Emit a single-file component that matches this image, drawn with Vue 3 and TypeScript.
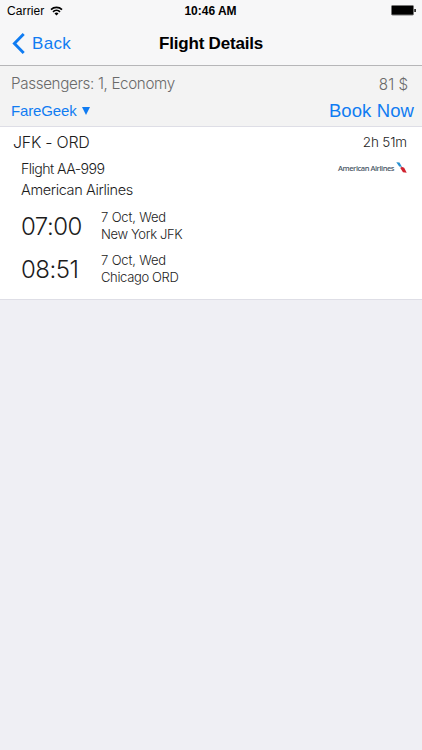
<script setup lang="ts">
interface Stop {
  time: string
  date: string
  place: string
}

const stops: Stop[] = [
  { time: '07:00', date: '7 Oct, Wed', place: 'New York JFK' },
  { time: '08:51', date: '7 Oct, Wed', place: 'Chicago ORD' },
]
</script>

<template>
  <div class="screen">
    <header class="top">
      <div class="status">
        <div class="carrier">
          <span>Carrier</span>
          <svg class="wifi" width="13" height="10" viewBox="0 0 13 10">
            <path d="M1 3.6A8 8 0 0 1 12 3.6M3 5.9A5 5 0 0 1 10 5.9" fill="none" stroke="#000" stroke-width="1.7" />
            <path d="M4.5 7.5A3 3 0 0 1 8.5 7.5L6.5 9.6Z" />
          </svg>
        </div>
        <span class="clock">10:46 AM</span>
        <svg class="battery" width="26" height="11" viewBox="0 0 26 11">
          <rect x="0.5" y="0.5" width="22" height="9.5" rx="1" fill="#000" stroke="#777" />
          <rect x="23.2" y="4" width="1.8" height="3" fill="#333" />
        </svg>
      </div>
      <nav class="nav">
        <button class="back">
          <svg width="13" height="21" viewBox="0 0 13 21">
            <path d="M11.7 1.1L2.4 10.5L11.7 19.9" fill="none" stroke="currentColor" stroke-width="2.9" />
          </svg>
          <span>Back</span>
        </button>
        <h1 class="title">Flight Details</h1>
      </nav>
    </header>

    <section class="summary">
      <div class="row who">
        <span class="passengers">Passengers: 1, Economy</span>
        <span class="price">81 $</span>
      </div>
      <div class="row offer">
        <button class="agency">
          <span>FareGeek</span>
          <svg width="8" height="8" viewBox="0 0 8 8"><path d="M0 0H8L4 8Z" fill="currentColor" /></svg>
        </button>
        <button class="book">Book Now</button>
      </div>
    </section>

    <section class="flight">
      <div class="row route">
        <span class="codes">JFK - ORD</span>
        <span class="duration">2h 51m</span>
      </div>
      <div class="row number">
        <span class="flight-no">Flight AA-999</span>
        <div class="logo">
          <span>American Airlines</span>
          <svg width="11" height="11" viewBox="0 0 11 11">
            <path d="M0.3 0.2L3.5 0.6L6 5L3.2 4.4Z" fill="#2790d0" />
            <path d="M3 4.3L6 5L5.3 6.4Z" fill="#b8c6d0" />
            <path d="M5.7 4.8L8.2 5.8L10.7 10.8L7 10.2L4.4 6.3Z" fill="#d0222f" />
          </svg>
        </div>
      </div>
      <div class="airline">American Airlines</div>
      <div v-for="stop in stops" :key="stop.time" class="stop">
        <span class="time">{{ stop.time }}</span>
        <div class="where">
          <span class="date">{{ stop.date }}</span>
          <span class="place">{{ stop.place }}</span>
        </div>
      </div>
    </section>
  </div>
</template>

<style>
body {
  background: #efeff4;
}
</style>

<style scoped>
.screen {
  min-height: 750px;
  background: #efeff4;
  color: #1c1c1c;
  font-family: Inter, "Liberation Sans", sans-serif;
  font-weight: 300;
  white-space: nowrap;
}

button {
  display: flex;
  align-items: center;
  padding: 0;
  border: 0;
  background: none;
  color: #107cf2;
  font: inherit;
}

.top {
  box-sizing: border-box;
  height: 66px;
  border-bottom: 1px solid #b6b6b8;
  background: #f7f7f8;
  color: #000;
  font-family: "Liberation Sans", sans-serif;
  font-weight: 400;
}

.status {
  display: grid;
  grid-template-columns: 1fr auto 1fr;
  align-items: center;
  height: 21px;
  padding: 0 5px 0 7px;
  font-size: 12px;
}

.carrier {
  display: flex;
  align-items: center;
  gap: 6px;
  letter-spacing: 0.1px;
}

.clock {
  position: relative;
  left: -1.5px;
  font-weight: 700;
  font-size: 12px;
}

.battery {
  justify-self: end;
}

.nav {
  display: grid;
  grid-template-columns: 1fr auto 1fr;
  align-items: center;
  height: 44px;
  padding: 0 12px;
}

.back {
  gap: 7px;
  font-size: 17px;
  letter-spacing: 0.3px;
}

.back span,
.title {
  padding-top: 2px;
}

.title {
  margin: 0;
  font-size: 17px;
  font-weight: 700;
  letter-spacing: -0.2px;
}

.row {
  display: flex;
  align-items: center;
  justify-content: space-between;
}

.summary {
  box-sizing: border-box;
  height: 61px;
  padding: 4px 8px 0 11px;
  border-bottom: 1px solid #dedee6;
  background: #f3f3f3;
}

.who {
  height: 27px;
  padding-right: 6px;
  color: #6a6a6a;
  font-size: 15.2px;
}

.passengers {
  letter-spacing: -0.35px;
}

.price {
  padding-top: 2px;
}

.offer {
  height: 27px;
  font-family: "Liberation Sans", sans-serif;
}

.agency {
  gap: 5px;
  font-size: 15px;
  letter-spacing: -0.15px;
}

.book {
  font-size: 18.5px;
  letter-spacing: 0.1px;
}

.flight {
  box-sizing: border-box;
  height: 173px;
  padding: 1px 15px 0 13px;
  border-bottom: 1px solid #dedee6;
  background: #fff;
}

.route {
  height: 28px;
  font-size: 16px;
}

.codes {
  letter-spacing: -0.25px;
}

.duration {
  font-size: 13.5px;
  letter-spacing: -0.15px;
}

.number {
  height: 25px;
  padding-left: 8px;
  font-size: 14.2px;
}

.flight-no {
  letter-spacing: -0.58px;
}

.logo {
  display: flex;
  align-items: center;
  gap: 2px;
  padding-bottom: 2px;
  color: #4c5a68;
  font-family: "Open Sans", sans-serif;
  font-size: 7.5px;
  font-weight: 600;
  letter-spacing: -0.46px;
}

.airline {
  height: 24px;
  padding-left: 8px;
  font-size: 14.5px;
  line-height: 18px;
  letter-spacing: -0.37px;
}

.stop {
  display: grid;
  grid-template-columns: 80px auto;
  height: 43px;
  padding-left: 8px;
}

.time {
  font-size: 24px;
  line-height: 43px;
  letter-spacing: -0.5px;
}

.where {
  display: flex;
  flex-direction: column;
  padding-top: 4px;
  font-size: 13px;
  line-height: 17px;
}

.date {
  letter-spacing: -0.15px;
}

.place {
  letter-spacing: -0.35px;
}
</style>
